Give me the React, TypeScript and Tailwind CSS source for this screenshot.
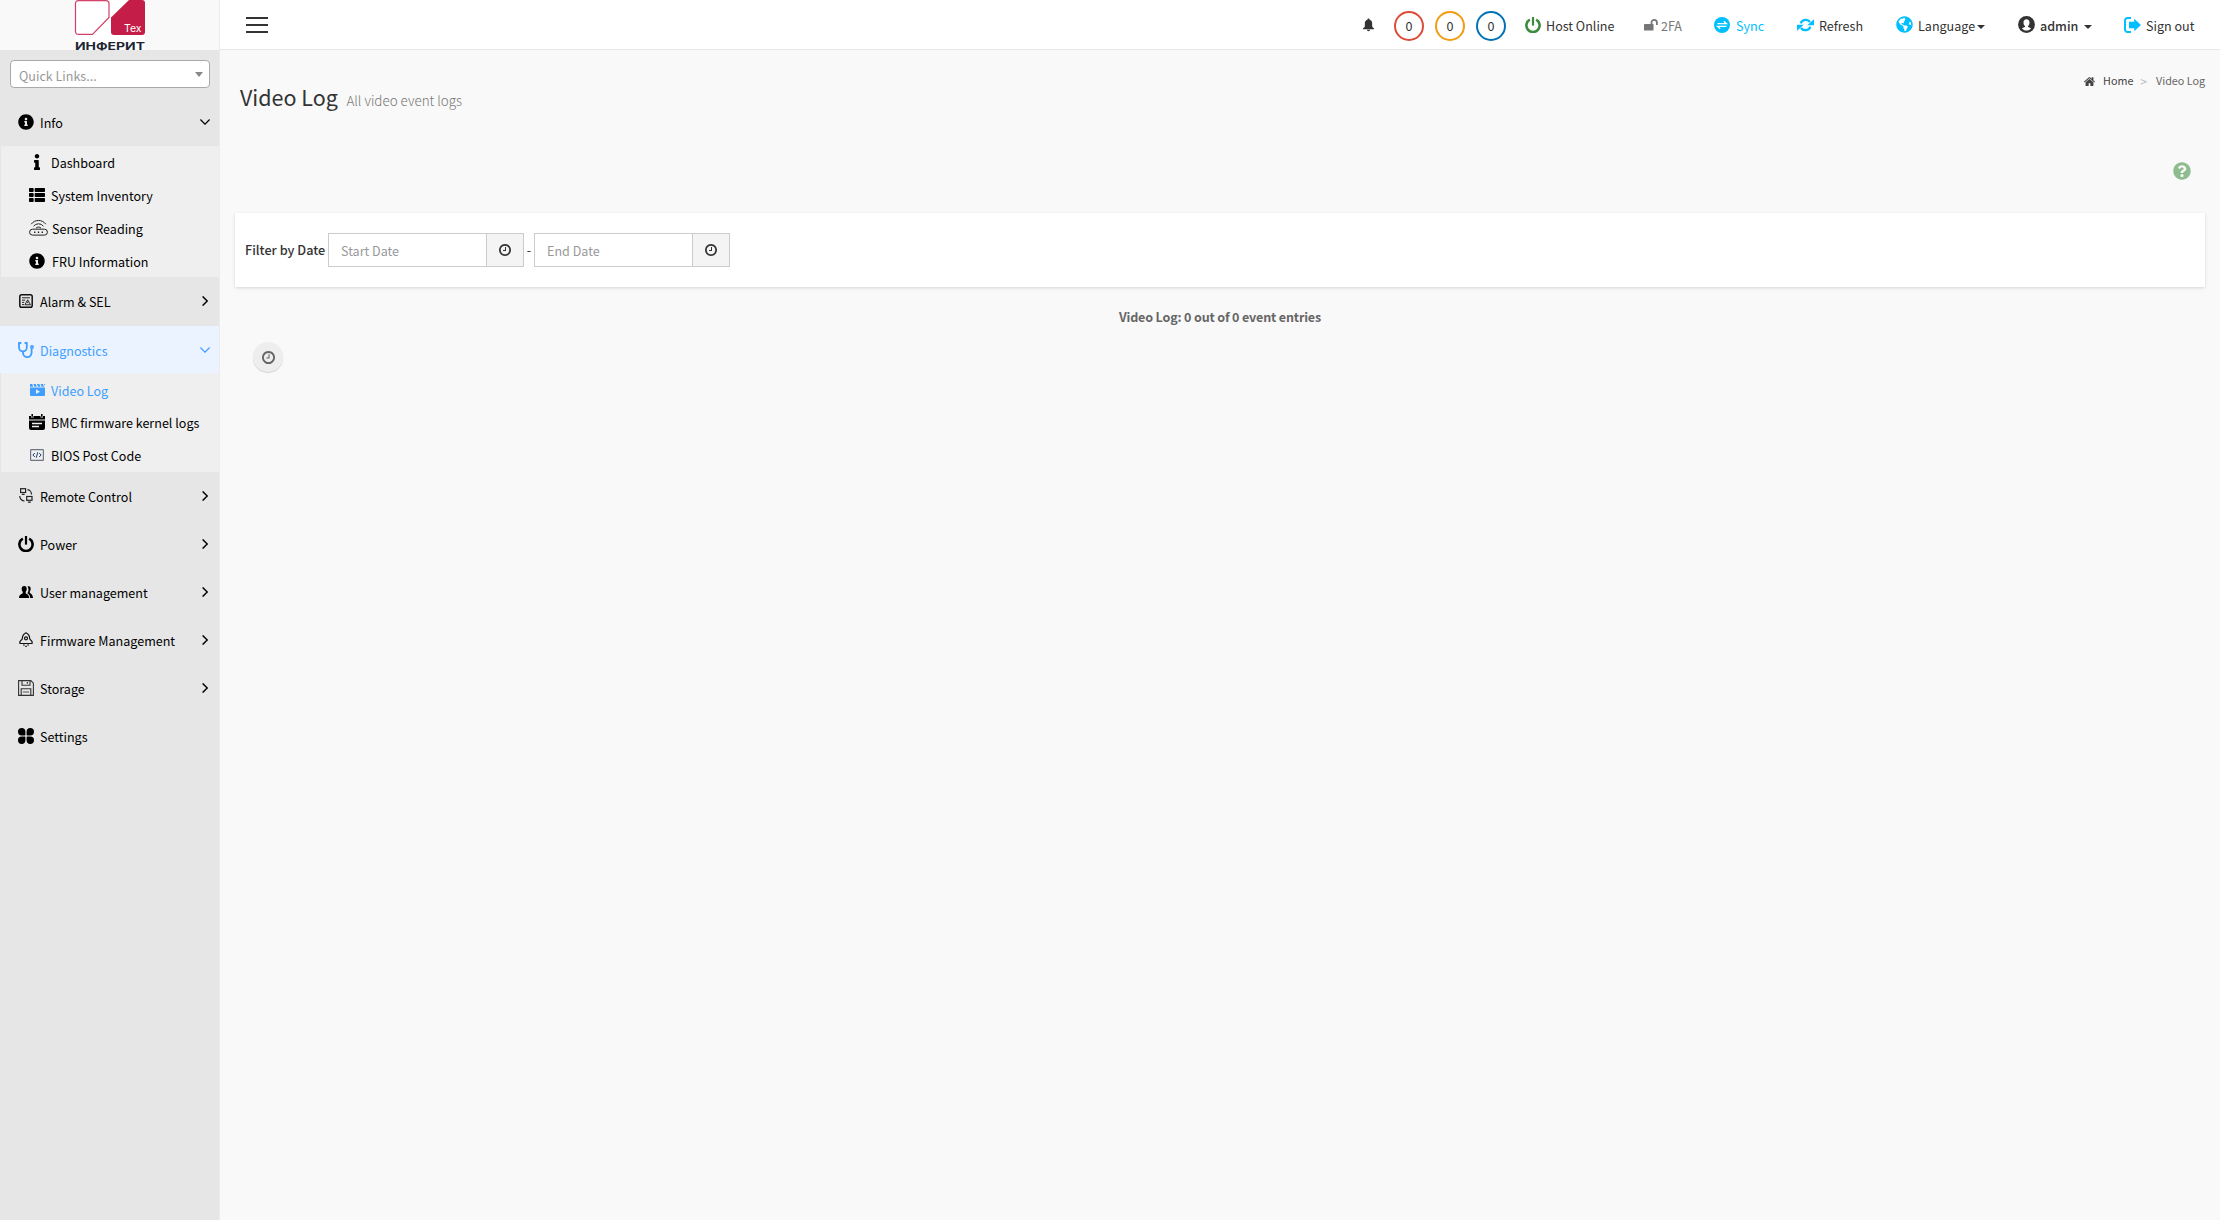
import React from "react";
import { FaInfo, FaInfoCircle, FaThList, FaQuestionCircle, FaGlobeAmericas } from "react-icons/fa";

// Types
interface IconProps {
  className?: string;
}

interface SubItem {
  label: string;
  icon: React.ReactNode;
  active?: boolean;
  row?: string;
}

interface MenuItem {
  label: string;
  icon: React.ReactNode;
  active?: boolean;
  open?: boolean;
  leaf?: boolean;
  items?: SubItem[];
}

// Icons
const ClockIcon = ({ className }: IconProps) => (
  <svg viewBox="128 128 1536 1536" className={className} fill="currentColor">
    <path d="M1024 544v448q0 14-9 23t-23 9h-320q-14 0-23-9t-9-23v-64q0-14 9-23t23-9h224v-352q0-14 9-23t23-9h64q14 0 23 9t9 23zm416 352q0-148-73-273t-198-198-273-73-273 73-198 198-73 273 73 273 198 198 273 73 273-73 198-198 73-273zm224 0q0 209-103 385.5t-279.5 279.5-385.5 103-385.5-103-279.5-279.5-103-385.5 103-385.5 279.5-279.5 385.5-103 385.5 103 279.5 279.5 103 385.5z" />
  </svg>
);

const HomeIcon = ({ className }: IconProps) => (
  <svg viewBox="90 240 1612 1300" className={className} fill="currentColor">
    <path d="M1472 992v480q0 26-19 45t-45 19h-384v-384h-256v384h-384q-26 0-45-19t-19-45v-480q0-1 .5-3t.5-3l575-474 575 474q1 2 1 6zm223-69l-62 74q-8 9-21 11h-3q-13 0-21-7l-692-577-692 577q-12 8-24 7-13-2-21-11l-62-74q-8-10-7-23.5t11-21.5l719-599q32-26 76-26t76 26l244 204v-195q0-14 9-23t23-9h192q14 0 23 9t9 23v408l219 182q10 8 11 21.5t-7 23.5z" />
  </svg>
);

const PowerIcon = ({ className }: IconProps) => (
  <svg viewBox="0 0 16 16" className={className} fill="none" stroke="currentColor">
    <path d="M4.8 2.6A6.6 6.6 0 1 0 11.2 2.6" strokeWidth="2.6" />
    <path d="M8 0v8.6" strokeWidth="2.2" />
  </svg>
);

const BellIcon = () => (
  <svg viewBox="0 0 12 14" className="h-[14px] w-[11px]" fill="#333">
    <path d="M6 0c.7 0 1.2.5 1.2 1.2C9 1.800 10 3.200 10 5v3.200c0 1 .8 1.700 2 2.600v.7H0v-.7c1.200-.9 2-1.600 2-2.600V5c0-1.800 1-3.200 2.800-3.800C4.800.5 5.300 0 6 0zM4.300 12.200h3.400c0 .9-.7 1.600-1.700 1.600s-1.700-.7-1.700-1.600z" />
  </svg>
);

const UnlockIcon = () => (
  <svg viewBox="0 0 14 12" className="h-[12px] w-[14px]" fill="none">
    <rect x="0" y="5" width="9.500" height="6.500" rx=".6" fill="#777" />
    <path d="M7.500 5V3.600a2.600 2.600 0 0 1 5.400 0V6" stroke="#777" strokeWidth="1.800" />
  </svg>
);

const SyncIcon = () => (
  <svg viewBox="0 0 16 16" className="size-[16px]">
    <circle cx="8" cy="8" r="8" fill="#00bfff" />
    <path d="M3.500 6.700h9L9.800 4.200M12.500 9.300h-9l2.700 2.500" fill="none" stroke="#fff" strokeWidth="1.300" />
  </svg>
);

const RefreshIcon = () => (
  <svg viewBox="0 0 17 14" className="h-[14px] w-[17px]">
    <path d="M3.700 5.400A5.200 5 0 0 1 13 4M13.300 8.600A5.200 5 0 0 1 4 10" fill="none" stroke="#00bfff" strokeWidth="2.200" />
    <path d="M17 1.200V7.200H10.200zM0 12.800V6.800H6.800z" fill="#00bfff" />
  </svg>
);

const UserIcon = () => (
  <svg viewBox="0 0 17 17" className="size-[17px]">
    <circle cx="8.500" cy="8.500" r="8.400" fill="#333" />
    <path d="M8.500 3.300c1.900 0 3 1.300 3 3.100 0 1.700-.6 3-1.500 3.600v.9c1.300.3 2.600.9 3 1.600-1 1.300-2.700 2.100-4.500 2.100s-3.500-.8-4.500-2.100c.4-.7 1.700-1.300 3-1.600V10C6.100 9.400 5.500 8.100 5.500 6.400c0-1.800 1.100-3.100 3-3.100z" fill="#fff" />
  </svg>
);

const SignOutIcon = () => (
  <svg viewBox="0 0 17 16" className="h-[16px] w-[17px]">
    <path d="M7 1H3.500A2.500 2.500 0 0 0 1 3.500v9A2.500 2.500 0 0 0 3.500 15H7" fill="none" stroke="#00bfff" strokeWidth="2" />
    <path d="M10.200 1.800L17 8l-6.800 6.200v-3H5V4.800h5.200z" fill="#00bfff" />
  </svg>
);

const SensorIcon = () => (
  <svg viewBox="0 0 19 17" className="h-[17px] w-[19px]" fill="none" stroke="#222" strokeWidth="1">
    <rect x=".6" y="10.200" width="17.800" height="5.900" rx="2.900" />
    <path d="M2.200 5.200a9 9 0 0 1 14.600 0M4.600 7.200a6.200 6.200 0 0 1 9.800 0M7 9.200a3.300 3.300 0 0 1 5 0" />
    <path d="M5 13.200h1.400M8.800 13.200h1.400M12.600 13.200h1.400" strokeWidth="1.400" />
  </svg>
);

const AlarmIcon = () => (
  <svg viewBox="0 0 14 14" className="size-[14px]" fill="none" stroke="#111">
    <rect x=".8" y=".8" width="12.400" height="12.400" rx="1.800" strokeWidth="1.500" />
    <path d="M3 3.800h8M3 6.200h3.200M3 8.400h2.200M3 10.600h2" strokeWidth=".9" />
    <path d="M8.700 5.800l2.800 5H5.900zM8.700 7.600v1.600" strokeWidth=".9" />
  </svg>
);

const StethoscopeIcon = () => (
  <svg viewBox="0 0 16 16" className="size-[16px]" fill="none" stroke="#409eff" strokeWidth="1.800">
    <path d="M3.300 1H1v4.500a3.900 3.900 0 0 0 7.800 0V1H6.600" />
    <path d="M5 9.400v1.400a4.300 4.300 0 0 0 8.600 0V6.500" />
    <circle cx="14" cy="5" r="1.200" strokeWidth="1.500" />
  </svg>
);

const VideoIcon = () => (
  <svg viewBox="0 0 15 12" className="ml-px h-[12px] w-[15px]">
    <path d="M0 3.600h15V11a1 1 0 0 1-1 1H1a1 1 0 0 1-1-1zM0 0h2.200l1 2.700H0zM3.400 0h2.400l1 2.700H4.400zM7 0h2.400l1 2.700H8zM10.600 0H13l1 2.700h-2.400zM14 0h1v2z" fill="#409eff" />
    <path d="M6 5.300l4 2.400-4 2.400z" fill="#efefef" />
  </svg>
);

const CalendarIcon = () => (
  <svg viewBox="0 0 16 16" className="size-[16px]">
    <path d="M0 2h2v1.500h2.500V2h7v1.500H14V2h2v3.500H0zM0 6.500h16V14a2 2 0 0 1-2 2H2a2 2 0 0 1-2-2z" fill="#000" />
    <path d="M3.200 0v2.800M12.800 0v2.800" stroke="#000" strokeWidth="1.500" />
    <path d="M3 9.500h10M3 12.500h7" stroke="#efefef" strokeWidth="1.300" />
  </svg>
);

const CodeIcon = () => (
  <svg viewBox="0 0 14 12" className="ml-px h-[12px] w-[14px]" fill="none">
    <rect x=".6" y=".6" width="12.800" height="10.800" rx=".6" stroke="#6f7684" strokeWidth="1.200" />
    <path d="M4.800 4L2.900 6l1.900 2M9.200 4l1.900 2-1.900 2M7.700 3.300L6.300 8.700" stroke="#1f3b6e" />
  </svg>
);

const RemoteIcon = () => (
  <svg viewBox="0 0 14 15" className="h-[15px] w-[14px]" fill="none" stroke="#222" strokeWidth="1.200">
    <rect x="1.600" y=".7" width="5" height="3.800" />
    <path d="M2.800 6.300h2.800M8.900 14.200h2.900" />
    <rect x="7.700" y="8.500" width="5.300" height="3.800" />
    <path d="M8.500 1.700a4.600 4.600 0 0 1 4 4.800M.8 8a4.800 4.800 0 0 0 4.700 5" />
  </svg>
);

const UsersIcon = () => (
  <svg viewBox="0 0 14 12" className="h-[12px] w-[14px]" fill="#000">
    <path d="M5.200 0C7 0 7.800 1.300 7.700 3c0 1.300-.5 2.200-1 2.800v1.400c.3.800 3.500 1 3.500 4.800H0c0-3.800 3.400-4 3.700-4.800V5.800c-.5-.6-1-1.500-1-2.800C2.600 1.300 3.400 0 5.200 0z" />
    <path d="M8.500.6c.4-.3.800-.4 1.200-.4 1.400 0 2 1 2 2.500 0 1.200-.4 2.200-.9 2.800v1.300c.3.800 3 1.100 3.200 5.200h-2.800c0-3-1.300-3.800-2.900-4.800.7-.8 1.200-2 1.200-3.400 0-1.400-.3-2.400-1-3.200z" />
  </svg>
);

const RocketIcon = () => (
  <svg viewBox="0 0 14 15" className="h-[15px] w-[14px]" fill="none" stroke="#111" strokeWidth="1.200">
    <path d="M7 .8C4.500 2 3.300 4 3.300 6.800L.9 9.600v1.900h12.200V9.600l-2.400-2.800C10.700 4 9.500 2 7 .8z" strokeLinejoin="round" />
    <circle cx="7" cy="6.300" r="1.500" />
    <path d="M4 13h1.800M8.200 13H10M6.200 14.400h1.600" />
  </svg>
);

const FloppyIcon = () => (
  <svg viewBox="0 0 16 16" className="size-[16px]" fill="none" stroke="#333" strokeWidth="1.100">
    <path d="M.6.600h12.200l2.600 2.600v12.200H.6z" />
    <path d="M4 .6v4.600h8V.6M3.200 15.400V8.800h9.600v6.600M9.400 2v1.800" />
    <path d="M4.800 12h6.400" strokeWidth=".8" />
  </svg>
);

const SettingsIcon = () => (
  <svg viewBox="0 0 16 16" className="size-[16px]" fill="#000">
    <path d="M3.700 0a3.700 3.700 0 0 1 3.700 3.700v3.100a.6.6 0 0 1-.6.6H3.700a3.700 3.700 0 0 1 0-7.400zM12.300 0a3.700 3.700 0 0 1 0 7.400H9.200a.6.6 0 0 1-.6-.6V3.700A3.700 3.700 0 0 1 12.300 0zM3.700 8.600h3.100a.6.6 0 0 1 .6.600v3.100a3.700 3.700 0 1 1-3.700-3.700zM9.200 8.600h3.100a3.700 3.700 0 1 1-3.700 3.700V9.200a.6.6 0 0 1 .6-.6z" />
  </svg>
);

const ArrowIcon = ({ open }: { open?: boolean }) =>
  open ? (
    <svg viewBox="0 0 10 6" className="h-[6px] w-[10px]" fill="none" stroke="currentColor" strokeWidth="1.200">
      <path d="M.4.500L5 5.200 9.600.5" />
    </svg>
  ) : (
    <svg viewBox="0 0 6 10" className="mr-[2px] h-[10px] w-[6px]" fill="none" stroke="currentColor" strokeWidth="1.400">
      <path d="M.6.400L5.200 5 .6 9.600" />
    </svg>
  );

const Caret = ({ className = "" }: IconProps) => (
  <span
    className={`size-0 border-x-4 border-t-4 border-x-transparent border-t-[#333] ${className}`}
  />
);

// Data
const menu: MenuItem[] = [
  {
    label: "Info",
    icon: <FaInfoCircle className="size-[16px]" />,
    open: true,
    items: [
      { label: "Dashboard", icon: <FaInfo className="ml-[4px] h-[16px] w-[8px]" /> },
      { label: "System Inventory", icon: <FaThList className="size-[16px]" /> },
      { label: "Sensor Reading", icon: <SensorIcon />, row: "pl-px" },
      {
        label: "FRU Information",
        icon: <FaInfoCircle className="size-[16px]" />,
        row: "pl-px",
      },
    ],
  },
  { label: "Alarm & SEL", icon: <AlarmIcon /> },
  {
    label: "Diagnostics",
    icon: <StethoscopeIcon />,
    active: true,
    open: true,
    items: [
      { label: "Video Log", icon: <VideoIcon />, active: true },
      { label: "BMC firmware kernel logs", icon: <CalendarIcon /> },
      { label: "BIOS Post Code", icon: <CodeIcon /> },
    ],
  },
  { label: "Remote Control", icon: <RemoteIcon /> },
  { label: "Power", icon: <PowerIcon className="size-[16px]" /> },
  { label: "User management", icon: <UsersIcon /> },
  { label: "Firmware Management", icon: <RocketIcon /> },
  { label: "Storage", icon: <FloppyIcon /> },
  { label: "Settings", icon: <SettingsIcon />, leaf: true },
];

const counters = [
  { value: 0, color: "border-[#dd4b39] mr-[11px]" },
  { value: 0, color: "border-[#f39c12] mr-[11px]" },
  { value: 0, color: "border-[#0073b7] mr-[19px]" },
];

// Sidebar
const Logo = () => (
  <div className="flex h-[50px] justify-center bg-[#f9f9f9]">
    <svg viewBox="0 0 70 50" className="h-[50px] w-[70px] overflow-visible bg-white">
      <path d="M3.500.600H31q3 0 3 3v13.800L17.500 34.300H3.500q-3 0-3-3V3.600q0-3 3-3z" fill="#fff" stroke="#d4406a" strokeWidth="1.200" />
      <path d="M54 0h13q3 0 3 3v29q0 3-3 3H39q-3 0-3-3V17.500z" fill="#c41d48" />
      <text x="49" y="32" textLength="17.500" lengthAdjust="spacingAndGlyphs" className="font-['Inter'] text-[10.500px]" fill="#fff">
        Тех
      </text>
      <text x="0" y="50" textLength="70" lengthAdjust="spacingAndGlyphs" className="font-['Inter'] text-[10.500px] font-bold" fill="#1d2733">
        ИНФЕРИТ
      </text>
    </svg>
  </div>
);

const QuickLinks = () => (
  <div className="mt-[10px] mr-[9px] ml-[10px] flex h-[28px] items-center justify-between rounded-[4px] border border-[#aaa] bg-white pr-[6px] pl-[8px]">
    <span className="pt-[3px] text-[12.550px] text-[#999]">Quick Links...</span>
    <span className="size-0 border-x-4 border-t-5 border-x-transparent border-t-[#888]" />
  </div>
);

const SubMenu = ({ items }: { items: SubItem[] }) => (
  <ul className="ml-px bg-[#efefef]">
    {items.map((item) => (
      <li
        key={item.label}
        className={`flex h-[32.800px] items-center pl-[28px] ${item.active ? "text-[#409eff]" : "text-black"}`}
      >
        <span className="flex w-[22px] shrink-0 items-center">{item.icon}</span>
        <span className={`pt-[2px] ${item.row ?? ""}`}>{item.label}</span>
      </li>
    ))}
  </ul>
);

const Sidebar = () => (
  <aside className="w-[220px] shrink-0 border-r border-[#ececec] bg-[#e6e6e6]">
    <Logo />
    <QuickLinks />
    <nav className="mt-[10px] text-[12.550px] whitespace-nowrap">
      {menu.map((item) => (
        <div key={item.label}>
          <div
            className={`flex h-[48px] items-center pr-[9px] pl-[18px] ${item.active ? "border-t border-[#e6e6e6] bg-[#eaf3ff] text-[#409eff]" : "text-black"}`}
          >
            <span className="flex w-[16px] shrink-0 items-center justify-center">{item.icon}</span>
            <span className="flex-1 pt-[2px] pl-[6px]">{item.label}</span>
            {!item.leaf && <ArrowIcon open={item.open} />}
          </div>
          {item.items && <SubMenu items={item.items} />}
        </div>
      ))}
    </nav>
  </aside>
);

// Header
const HeaderItem = ({
  width,
  icon,
  children,
}: {
  width: string;
  icon: React.ReactNode;
  children: React.ReactNode;
}) => (
  <div className={`flex shrink-0 items-center ${width}`}>
    {icon}
    {children}
  </div>
);

const Header = () => (
  <header className="flex h-[50px] items-center border-b border-[#e7e7e7] bg-white pl-[26px] text-[12.550px] whitespace-nowrap text-[#333]">
    <button className="flex w-[22px] flex-col gap-[5px]">
      <span className="h-[2px] bg-[#333]" />
      <span className="h-[2px] bg-[#333]" />
      <span className="h-[2px] bg-[#333]" />
    </button>
    <div className="ml-auto flex items-center">
      <div className="w-[31px]">
        <BellIcon />
      </div>
      {counters.map((counter) => (
        <span
          key={counter.color}
          className={`mt-[2px] flex size-[30px] items-center justify-center rounded-full border-2 pt-px ${counter.color}`}
        >
          {counter.value}
        </span>
      ))}
      <HeaderItem width="w-[119px]" icon={<PowerIcon className="size-[16px] text-[#3c8c40]" />}>
        <span className="pt-[3px] pl-[5px]">Host Online</span>
      </HeaderItem>
      <HeaderItem width="w-[70px]" icon={<UnlockIcon />}>
        <span className="pt-[2px] pl-[3px] text-[#777]">2FA</span>
      </HeaderItem>
      <HeaderItem width="w-[83px]" icon={<SyncIcon />}>
        <span className="pt-[3px] pl-[6px] text-[#00bfff]">Sync</span>
      </HeaderItem>
      <HeaderItem width="w-[99px]" icon={<RefreshIcon />}>
        <span className="pt-[3px] pl-[5px]">Refresh</span>
      </HeaderItem>
      <HeaderItem width="w-[122px]" icon={<FaGlobeAmericas className="size-[17px] text-[#00bfff]" />}>
        <span className="pt-[3px] pl-[5px]">Language</span>
        <Caret className="mt-[4px] ml-[2px]" />
      </HeaderItem>
      <HeaderItem width="w-[106px]" icon={<UserIcon />}>
        <span className="pt-[3px] pl-[5px] font-medium">admin</span>
        <Caret className="mt-[4px] ml-[6px]" />
      </HeaderItem>
      <HeaderItem width="w-[96px]" icon={<SignOutIcon />}>
        <span className="pt-[3px] pl-[5px]">Sign out</span>
      </HeaderItem>
    </div>
  </header>
);

// Content
const DateInput = ({ placeholder }: { placeholder: string }) => (
  <div className="flex h-[34px] w-[196px] border border-[#ccc]">
    <input
      className="w-[157px] bg-white px-[12px] pt-[2px] text-[12.550px] placeholder:text-[#999]"
      placeholder={placeholder}
    />
    <span className="flex flex-1 items-center justify-center border-l border-[#ccc] bg-[#f4f4f4]">
      <ClockIcon className="size-[12px] text-[#333]" />
    </span>
  </div>
);

const PageTitle = () => (
  <div className="flex h-[80px] items-start justify-between pr-[15px] pl-[20px]">
    <h1 className="flex items-baseline pt-[31px] text-[21.500px] leading-[32px] text-[#333]">
      Video Log
      <small className="ml-[8.500px] text-[13.400px] font-light text-[#777]">All video event logs</small>
    </h1>
    <div className="flex items-center pt-[22px] text-[10.750px] leading-[18px] text-[#444]">
      <HomeIcon className="h-[9px] w-[11px]" />
      <span className="ml-[8px]">Home</span>
      <span className="ml-[7px] text-[12px] text-[#bbb]">&gt;</span>
      <span className="ml-[9px] text-[#666]">Video Log</span>
    </div>
  </div>
);

const Main = () => (
  <main>
    <PageTitle />
    <div className="flex h-[83px] justify-end pt-[32px] pr-[29px]">
      <FaQuestionCircle className="size-[18px] text-[#8fbc8f]" />
    </div>
    <section className="mr-[15px] ml-[15px] flex h-[74px] items-center bg-white pl-[10px] text-[12.550px] text-[#333] shadow-[0_1px_3px_rgba(0,0,0,0.15)]">
      <label className="w-[83px] text-[12.700px] font-medium whitespace-nowrap">Filter by Date</label>
      <DateInput placeholder="Start Date" />
      <span className="w-[10px] text-center">-</span>
      <DateInput placeholder="End Date" />
    </section>
    <p className="mt-[20px] text-center text-[12.550px] leading-[20px] font-bold tracking-[-0.170px] text-[#666]">
      Video Log: 0 out of 0 event entries
    </p>
    <div className="mt-[15px] ml-[33px] flex size-[30px] items-center justify-center rounded-full bg-[#eee] shadow-[0_1px_1px_rgba(0,0,0,0.15)]">
      <ClockIcon className="size-[13px] text-[#666]" />
    </div>
  </main>
);

export default function App() {
  return (
    <div className="flex h-[1220px] w-[2220px] overflow-hidden bg-[#f9f9f9] font-['Noto_Sans_CJK_SC',sans-serif] leading-[20px]">
      <Sidebar />
      <div className="flex-1">
        <Header />
        <Main />
      </div>
    </div>
  );
}
